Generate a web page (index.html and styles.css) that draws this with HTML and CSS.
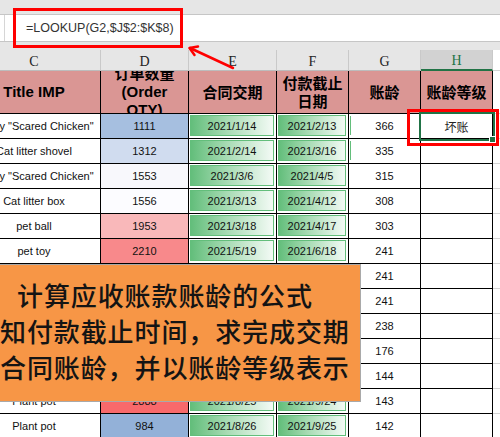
FILE: index.html
```html
<!DOCTYPE html>
<html lang="zh">
<head>
<meta charset="utf-8">
<title>LOOKUP 账龄</title>
<link rel="stylesheet" href="styles.css">
</head>
<body>
<div class="app">
  <div class="ribbon"></div>
  <div class="fbar"><div class="namebox"></div><div class="formula">=LOOKUP(G2,$J$2:$K$8)</div></div>
  <div class="gap"></div>
  <div class="grid">
    <div class="ch">C</div><div class="ch">D</div><div class="ch">E</div><div class="ch">F</div><div class="ch">G</div><div class="ch sel">H</div><div class="ch i"></div>

    <div class="hd">Title IMP</div>
    <div class="hd"><div class="lines">订单数量<br>(Order<br>QTY)</div></div>
    <div class="hd cjk">合同交期</div>
    <div class="hd cjk">付款截止<br>日期</div>
    <div class="hd cjk">账龄</div>
    <div class="hd cjk">账龄等级</div>
    <div class="hi i"></div>

    <div class="tx">Funny "Scared Chicken"</div><div class="num" style="background:#a6bfe0">1111</div><div class="dt"><div class="bar">2021/1/14</div></div><div class="dt"><div class="bar">2021/2/13</div></div><div class="num gb">366</div><div class="num active">坏账</div><div class="i"></div>
    <div class="tx">Cat litter shovel</div><div class="num" style="background:#d0dcef">1312</div><div class="dt"><div class="bar">2021/2/14</div></div><div class="dt"><div class="bar">2021/3/16</div></div><div class="num gb">335</div><div class="num"></div><div class="i"></div>
    <div class="tx">Funny "Scared Chicken"</div><div class="num" style="background:#f8f8fc">1553</div><div class="dt"><div class="bar">2021/3/6</div></div><div class="dt"><div class="bar">2021/4/5</div></div><div class="num">315</div><div class="num"></div><div class="i"></div>
    <div class="tx">Cat litter box</div><div class="num" style="background:#fcfcff">1556</div><div class="dt"><div class="bar">2021/3/13</div></div><div class="dt"><div class="bar">2021/4/12</div></div><div class="num">308</div><div class="num"></div><div class="i"></div>
    <div class="tx">pet ball</div><div class="num" style="background:#f9b8ba">1953</div><div class="dt"><div class="bar">2021/3/18</div></div><div class="dt"><div class="bar">2021/4/17</div></div><div class="num">303</div><div class="num"></div><div class="i"></div>
    <div class="tx">pet toy</div><div class="num" style="background:#f8898b">2210</div><div class="dt"><div class="bar">2021/5/19</div></div><div class="dt"><div class="bar">2021/6/18</div></div><div class="num">241</div><div class="num"></div><div class="i"></div>
    <div class="tx">Cat bowl</div><div class="num" style="background:#e4e9f5">1420</div><div class="dt"><div class="bar">2021/5/19</div></div><div class="dt"><div class="bar">2021/6/18</div></div><div class="num">241</div><div class="num"></div><div class="i"></div>
    <div class="tx">Dog leash</div><div class="num" style="background:#cbd8ec">1280</div><div class="dt"><div class="bar">2021/5/19</div></div><div class="dt"><div class="bar">2021/6/18</div></div><div class="num">241</div><div class="num"></div><div class="i"></div>
    <div class="tx">Pet bed</div><div class="num" style="background:#fce3e5">1705</div><div class="dt"><div class="bar">2021/5/22</div></div><div class="dt"><div class="bar">2021/6/21</div></div><div class="num">238</div><div class="num"></div><div class="i"></div>
    <div class="tx">Cat tree</div><div class="num" style="background:#fac4c6">1890</div><div class="dt"><div class="bar">2021/7/27</div></div><div class="dt"><div class="bar">2021/8/22</div></div><div class="num">176</div><div class="num"></div><div class="i"></div>
    <div class="tx">Bird cage</div><div class="num" style="background:#fdf0f2">1630</div><div class="dt"><div class="bar">2021/8/24</div></div><div class="dt"><div class="bar">2021/9/23</div></div><div class="num">144</div><div class="num"></div><div class="i"></div>
    <div class="tx">Plant pot</div><div class="num" style="background:#f8696b">2888</div><div class="dt"><div class="bar">2021/8/25</div></div><div class="dt"><div class="bar">2021/9/24</div></div><div class="num">143</div><div class="num"></div><div class="i"></div>
    <div class="tx">Plant pot</div><div class="num" style="background:#93b1d8">984</div><div class="dt"><div class="bar">2021/8/26</div></div><div class="dt"><div class="bar">2021/9/25</div></div><div class="num">142</div><div class="num"></div><div class="i"></div>
  </div>

  <div class="callout">
    <div class="cl first">计算应收账款账龄的公式</div>
    <div class="cl">知付款截止时间，求完成交期</div>
    <div class="cl">合同账龄，并以账龄等级表示</div>
  </div>
  <div class="mark mark-formula"></div>
  <div class="mark mark-cell"></div>
  <svg class="arrow" width="500" height="437" viewBox="0 0 500 437">
    <line x1="233" y1="68" x2="190" y2="48" stroke="#f00" stroke-width="2.5" stroke-linecap="round"/>
    <polyline points="198,46.5 189.5,48 194.5,55" fill="none" stroke="#f00" stroke-width="2.5" stroke-linecap="round" stroke-linejoin="round"/>
  </svg>
</div>
</body>
</html>
```

FILE: styles.css
```css
html, body {
  margin: 0;
  padding: 0;
  background: #fff;
}

.app {
  position: relative;
  width: 500px;
  height: 437px;
  overflow: hidden;
  background: #fff;
  font-family: "Liberation Sans", Arial, "Noto Sans CJK SC", sans-serif;
}

.ribbon {
  height: 15px;
  box-sizing: border-box;
  background: #e6e6e6;
  border-bottom: 1px solid #c6c6c6;
}

.fbar {
  height: 27px;
  box-sizing: border-box;
  display: flex;
  align-items: center;
  background: #fff;
  border-bottom: 1px solid #c6c6c6;
}

.namebox {
  width: 4px;
  align-self: stretch;
  border-right: 1px solid #d6d6d6;
}

.formula {
  padding-left: 21px;
  font-size: 12.5px;
  color: #333;
  white-space: nowrap;
}

.gap {
  height: 8px;
  background: #e6e6e6;
}

.grid {
  display: grid;
  margin-left: -32px;
  grid-template-columns: 133px 88px 88px 72px 72px 72px 80px;
  grid-template-rows: 21px 43px repeat(13, 25px);
}

.grid > div {
  box-sizing: border-box;
  border-right: 1px solid #000;
  border-bottom: 1px solid #000;
  display: flex;
  align-items: center;
  justify-content: center;
  overflow: hidden;
  min-width: 0;
  font-size: 11px;
  color: #111;
  white-space: nowrap;
}

.grid > .ch {
  background: #e6e6e6;
  border-right-color: #c9c9c9;
  border-bottom-color: #bcbcbc;
  font-family: "Liberation Serif", "DejaVu Serif", serif;
  font-size: 14px;
  color: #222;
  padding-top: 3px;
}

.grid > .ch.sel {
  background: #d2d2d2;
  color: #217346;
  border-bottom: 2px solid #217346;
}

.grid > .hd {
  background: #da9694;
  font-weight: 700;
  font-size: 15px;
  color: #000;
  text-align: center;
  line-height: 18px;
  white-space: normal;
}

.grid > .hd.cjk {
  font-family: "Noto Sans CJK SC", sans-serif;
  font-size: 15px;
}

.lines {
  font-family: "Liberation Sans", "Noto Sans CJK SC", sans-serif;
  line-height: 18px;
  flex-shrink: 0;
}

.grid > .i {
  border-right: none;
  border-bottom-color: #d4d4d4;
  background: #fff;
}

.grid > .hi {
  background: #fff;
}

.grid > .tx {
  justify-content: center;
}

.grid > .dt {
  padding: 1px 2px 2px 1px;
  align-items: stretch;
}

.bar {
  flex: 1;
  display: flex;
  align-items: center;
  justify-content: center;
  border: 1px solid #63be7b;
  background: linear-gradient(90deg, #63be7b 0%, #a9dcb5 45%, #f3faf5 100%);
}

.grid > .gb {
  background: linear-gradient(#63be7b, #63be7b) 1px 2px / 1px 19px no-repeat;
}

.grid > .active {
  position: relative;
  z-index: 1;
  overflow: visible;
  outline: 2px solid #217346;
  font-family: "Noto Sans CJK SC", sans-serif;
  font-size: 12px;
  color: #222;
}

.grid > .active::after {
  content: "";
  position: absolute;
  right: -4px;
  bottom: -5px;
  width: 5px;
  height: 5px;
  background: #217346;
  border: 1px solid #fff;
}

.callout {
  position: absolute;
  left: -1px;
  top: 264px;
  width: 362px;
  height: 138px;
  box-sizing: border-box;
  border: 1px solid #a9a9a9;
  background: #f79646;
  padding-top: 12px;
  z-index: 3;
}

.cl {
  font-family: "Noto Sans CJK SC", sans-serif;
  font-size: 26px;
  letter-spacing: 0.9px;
  line-height: 36px;
  color: #141414;
  font-weight: 500;
  white-space: nowrap;
}

.cl.first {
  padding-left: 17px;
}

.mark {
  position: absolute;
  box-sizing: border-box;
  border: 3px solid #ff0000;
  z-index: 4;
}

.mark-formula {
  left: 13px;
  top: 8px;
  width: 170px;
  height: 40px;
}

.mark-cell {
  left: 407px;
  top: 109px;
  width: 92px;
  height: 37px;
}

.arrow {
  position: absolute;
  left: 0;
  top: 0;
  z-index: 5;
  pointer-events: none;
}
```
